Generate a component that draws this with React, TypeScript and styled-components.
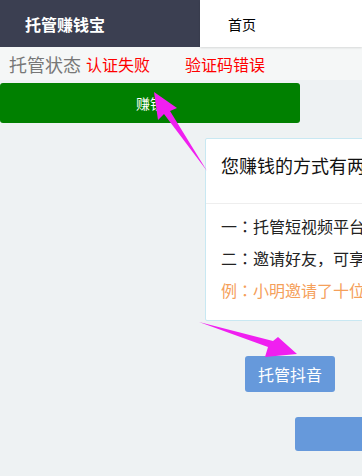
import React from "react";
import styled, { createGlobalStyle } from "styled-components";

const Global = createGlobalStyle`
  html, body {
    margin: 0;
    padding: 0;
    overflow: hidden;
    background: #eef2f3;
  }
  body {
    font-family: "Noto Sans CJK SC", "Noto Sans", sans-serif;
  }
`;

const Page = styled.div`
  position: relative;
  width: 362px;
  min-height: 476px;
  overflow: hidden;
  background: #eef2f3;
`;

const Header = styled.header`
  display: flex;
  height: 47px;
`;

const Brand = styled.div`
  width: 200px;
  flex: none;
  background: #3b3f51;
  color: #fff;
  font-size: 16px;
  font-weight: bold;
  display: flex;
  align-items: center;
  padding-left: 25px;
  box-sizing: border-box;
`;

const Nav = styled.nav`
  flex: 1;
  background: #fff;
  box-shadow: 0 1px 2px rgba(0, 0, 0, 0.12);
  display: flex;
  align-items: center;
  padding-left: 28px;
  font-size: 14px;
  color: #000;
`;

const StatusRow = styled.div`
  height: 33px;
  display: flex;
  align-items: center;
  padding-left: 9px;
  background: #f5f7f7;
  white-space: nowrap;
`;

const StatusLabel = styled.span`
  font-size: 18px;
  color: #777;
  margin-right: 5px;
`;

const StatusValue = styled.span<{ $gap?: number }>`
  font-size: 16px;
  color: #ff0000;
  margin-left: ${(p) => p.$gap ?? 0}px;
`;

const EarnButton = styled.button`
  display: flex;
  align-items: center;
  justify-content: center;
  width: 300px;
  height: 40px;
  margin-top: 3px;
  border: none;
  border-radius: 3px;
  background: #008000;
  color: #fff;
  font-family: inherit;
  font-size: 14px;
  padding: 0;
`;

const Card = styled.section`
  margin: 15px 0 0 205px;
  width: 420px;
  background: #fff;
  border: 1px solid #c8e8f2;
  border-radius: 2px;
  white-space: nowrap;
`;

const CardTitle = styled.div`
  padding: 14px 15px 0;
  height: 50px;
  font-size: 18px;
  line-height: 24px;
  color: #111;
  border-bottom: 1px solid #eeeeee;
`;

const CardBody = styled.div`
  padding: 6px 15px 14px;
`;

const Line = styled.p<{ $accent?: boolean }>`
  margin: 0;
  font-size: 16px;
  line-height: 32px;
  color: ${(p) => (p.$accent ? "#f5a05a" : "#222")};
`;

const Colon = styled.span`
  font-family: "Noto Sans CJK TC", "Noto Sans CJK SC", sans-serif;
`;

const ActionButton = styled.button<{ $left: number; $top: number; $width: number; $height: number }>`
  display: flex;
  align-items: center;
  justify-content: center;
  margin: ${(p) => p.$top}px 0 0 ${(p) => p.$left}px;
  width: ${(p) => p.$width}px;
  height: ${(p) => p.$height}px;
  border: none;
  border-radius: 3px;
  background: #6699db;
  color: #fff;
  font-family: inherit;
  font-size: 16px;
  padding: 0;
  white-space: nowrap;
`;

const Overlay = styled.svg`
  position: absolute;
  left: 0;
  top: 0;
  pointer-events: none;
`;

export default function App() {
  return (
    <Page>
      <Global />
      <Header>
        <Brand>托管赚钱宝</Brand>
        <Nav>首页</Nav>
      </Header>
      <StatusRow>
        <StatusLabel>托管状态</StatusLabel>
        <StatusValue>认证失败</StatusValue>
        <StatusValue $gap={35}>验证码错误</StatusValue>
      </StatusRow>
      <EarnButton>赚钱</EarnButton>
      <Card>
        <CardTitle>您赚钱的方式有两种</CardTitle>
        <CardBody>
          <Line>一<Colon>：</Colon>托管短视频平台账号，每天自动赚取收益</Line>
          <Line>二<Colon>：</Colon>邀请好友，可享受好友收益的提成</Line>
          <Line $accent>例<Colon>：</Colon>小明邀请了十位好友，每天额外获得收益</Line>
        </CardBody>
      </Card>
      <ActionButton $left={245} $top={35} $width={90} $height={36}>
        托管抖音
      </ActionButton>
      <ActionButton $left={295} $top={25} $width={210} $height={34}>
        托管快手
      </ActionButton>
      <Overlay width="362" height="476" viewBox="0 0 362 476">
        <polygon
          points="154,92 177,108 170,111 207,171 164,114 158,120"
          fill="#f01ff0"
        />
        <polygon
          points="199,322 273,341 278,337 297,354 265,357 268,347"
          fill="#f01ff0"
        />
      </Overlay>
    </Page>
  );
}
